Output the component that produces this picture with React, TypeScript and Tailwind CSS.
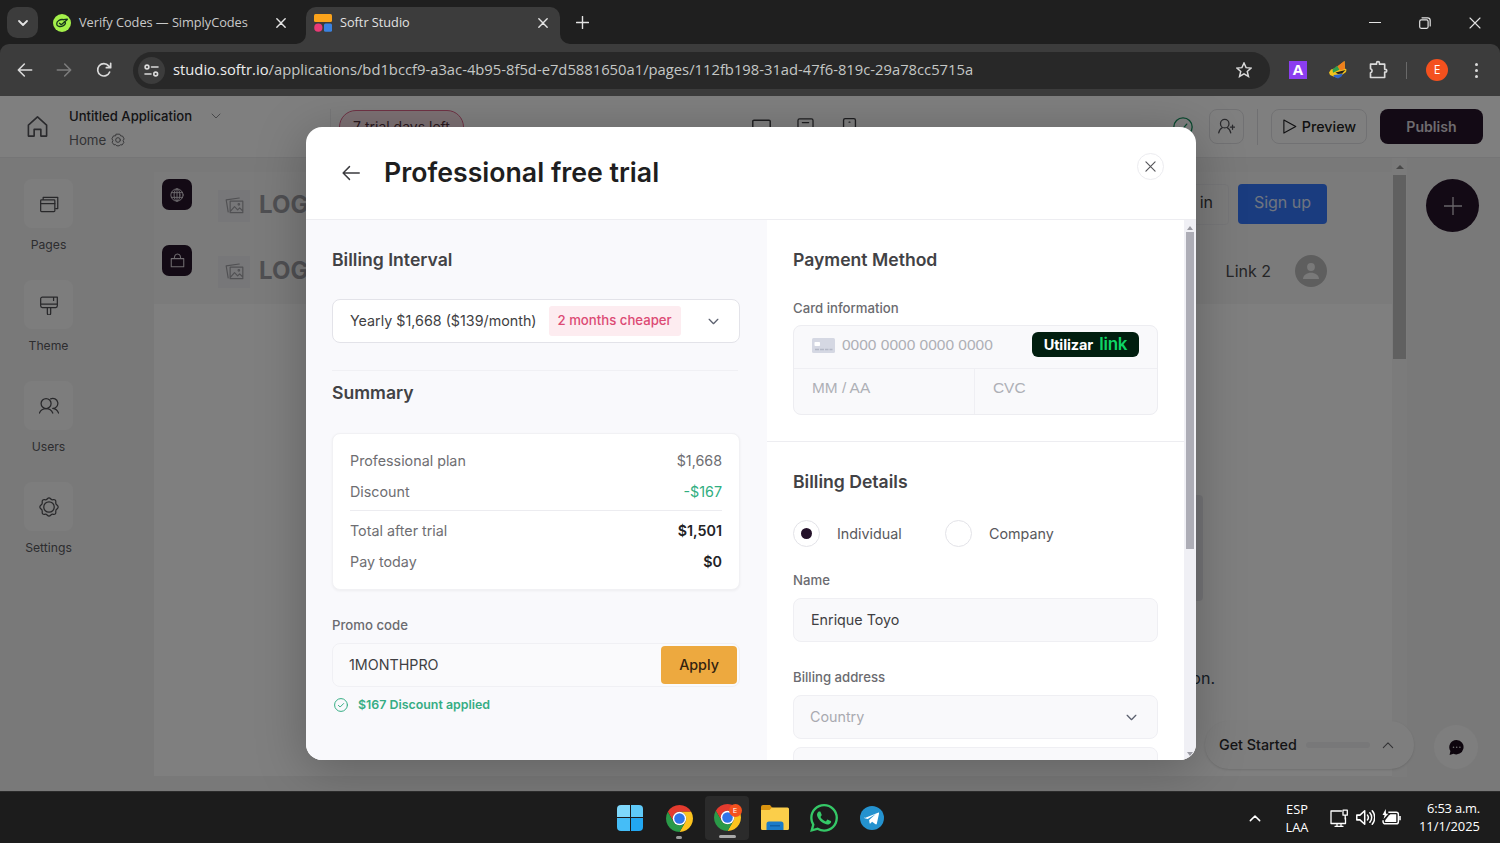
import type { ReactNode } from "react";

const UI = "font-['Inter','Liberation_Sans',sans-serif]";
const SYS = "font-['Open_Sans','Noto_Sans',sans-serif]";

type IconProps = {
  size?: number;
  w?: number;
  className?: string;
  box?: number;
  children: ReactNode;
};

function Icon({ size = 16, w = 1.5, box = 24, className = "", children }: IconProps) {
  return (
    <svg
      width={size}
      height={size}
      viewBox={`0 0 ${box} ${box}`}
      fill="none"
      stroke="currentColor"
      strokeWidth={w}
      strokeLinecap="round"
      strokeLinejoin="round"
      className={`shrink-0 ${className}`}
    >
      {children}
    </svg>
  );
}

function Chevron({ size = 14, w = 2, up = false, className = "" }: { size?: number; w?: number; up?: boolean; className?: string }) {
  return (
    <Icon size={size} w={w} className={className}>
      <path d={up ? "M4 16.5l8-8 8 8" : "M4 8l8 8 8-8"} />
    </Icon>
  );
}

function Close({ size = 10, w = 3, className = "" }: { size?: number; w?: number; className?: string }) {
  return (
    <Icon size={size} w={w} className={className}>
      <path d="M2 2l20 20M22 2L2 22" />
    </Icon>
  );
}

function ChromeLogo({ size = 27 }: { size?: number }) {
  return (
    <svg width={size} height={size} viewBox="0 0 48 48">
      <path fill="#e33b2e" d="M24 12H44.78A24 24 0 0 0 3.22 12L13.61 30A12 12 0 0 1 24 12Z" />
      <path fill="#fcc31e" d="M34.39 30L24 48A24 24 0 0 0 44.78 12H24A12 12 0 0 1 34.39 30Z" />
      <path fill="#2a9a48" d="M13.61 30L3.22 12A24 24 0 0 0 24 48L34.39 30A12 12 0 0 1 13.61 30Z" />
      <circle cx="24" cy="24" r="12" fill="#fff" />
      <circle cx="24" cy="24" r="9.4" fill="#2f74e8" />
    </svg>
  );
}

function TabStrip() {
  return (
    <div className="flex h-11 bg-[#1f1f1f] text-[#e3e3e3]">
      <div className="ml-[7px] mt-[7px] flex h-[31px] w-[31px] items-center justify-center rounded-[10px] bg-[#3c3c3c]">
        <Chevron size={12} w={3.6} />
      </div>
      <div className="ml-[15px] flex w-[236px] items-center pt-[1px]">
        <svg width="18" height="18" viewBox="0 0 18 18">
          <circle cx="9" cy="9" r="9" fill="#a4f04a" />
          <g fill="none" stroke="#16351c" strokeWidth="1.3" strokeLinejoin="round" strokeLinecap="round">
            <path d="M10.4 5.6C7 5 3.6 7 3.7 9.9c.1 2.6 3.6 3.2 6.3 1.9 2.6-1.2 3.3-3.5 1.3-4" />
            <path d="M6.5 9.3l1.8 1.4L14.3 5.5M10.4 5.6l3.9-.5" />
          </g>
        </svg>
        <span className="ml-2 w-[182px] whitespace-nowrap text-[12.8px] tracking-[-0.05px] text-[#c9c9c9]">Verify Codes — SimplyCodes</span>
        <Close size={10} w={3.4} className="ml-[15px]" />
      </div>
      <svg width="10" height="10" viewBox="0 0 10 10" className="ml-[7px] self-end">
        <path d="M10 0v10H0A10 10 0 0 0 10 0z" fill="#3c3c3c" />
      </svg>
      <div className="mt-[7px] flex h-[37px] w-[254px] items-center rounded-t-[10px] bg-[#3c3c3c] pb-[5px] pl-2">
        <svg width="18" height="18" viewBox="0 0 18 18">
          <rect width="18" height="8" rx="1.5" fill="#fba31b" />
          <circle cx="4.3" cy="13.7" r="4.1" fill="#ea3a76" />
          <rect x="10" y="9.6" width="8" height="8.2" rx="1.5" fill="#3a82e0" />
        </svg>
        <span className="ml-2 w-[198px] text-[12.7px] text-[#e3e3e3]">Softr Studio</span>
        <Close size={10} w={3.4} />
      </div>
      <svg width="10" height="10" viewBox="0 0 10 10" className="self-end">
        <path d="M0 0v10h10A10 10 0 0 1 0 0z" fill="#3c3c3c" />
      </svg>
      <div className="ml-[6px] flex items-center">
        <Icon size={13} w={2.6}>
          <path d="M12 1v22M1 12h22" />
        </Icon>
      </div>
      <div className="ml-auto flex items-center gap-[38px] pr-[19px] pt-px">
        <span className="h-px w-[12px] bg-[#e3e3e3]" />
        <Icon size={12} w={1.2} box={12}>
          <rect x="0.7" y="2.9" width="8.4" height="8.4" rx="1.5" />
          <path d="M3 .8h5.600a2.600 2.600 0 0 1 2.600 2.600V9" />
        </Icon>
        <Close size={12} w={2.2} />
      </div>
    </div>
  );
}

function Toolbar() {
  return (
    <div className="bg-[#1f1f1f]">
      <div className="flex h-[52px] items-center rounded-t-[9px] bg-[#3c3c3c] text-[#dadada]">
        <Icon size={16} w={2.4} className="ml-[17px]">
          <path d="M22 12H3M11 3l-9 9 9 9" />
        </Icon>
        <Icon size={16} w={2.4} className="ml-[23px] text-[#7c7c7c]">
          <path d="M2 12h19M13 3l9 9-9 9" />
        </Icon>
        <Icon size={16} w={2.5} className="ml-6">
          <path d="M20.5 15A9.3 9.3 0 1 1 19 5.8l2.5 2.5M22 2v6.5h-6.500" />
        </Icon>
        <div className="ml-[21px] flex h-[37px] w-[1137px] items-center rounded-full bg-[#282828]">
          <div className="ml-[5px] flex h-[27px] w-[27px] items-center justify-center rounded-full bg-[#3c3c3c]">
            <Icon size={15} w={1.6} box={15}>
              <circle cx="3" cy="4" r="1.9" />
              <path d="M7.5 4H14M1 11h6" />
              <circle cx="11.7" cy="11" r="1.9" />
            </Icon>
          </div>
          <span className="ml-2 w-[1063px] whitespace-nowrap pb-[2px] text-[14.78px] text-[#c4c7c5]">
            <span className="text-[#ececec]">studio.softr.io</span>
            /applications/bd1bccf9-a3ac-4b95-8f5d-e7d5881650a1/pages/112fb198-31ad-47f6-819c-29a78cc5715a
          </span>
          <Icon size={16} w={2.2}>
            <path d="M12 1.5l3.100 7 7.600.7-5.800 5 1.800 7.500L12 17.700l-6.700 4 1.800-7.500-5.800-5 7.600-.7z" strokeLinejoin="miter" />
          </Icon>
        </div>
        <div className="ml-[19px] flex h-[18px] w-[18px] items-center justify-center bg-[#8b3df0] pb-px text-[15px] font-bold text-white">A</div>
        <svg width="18" height="18" viewBox="0 0 18 18" className="ml-[22px]">
          <path d="M0 11.500L2 8.500 7 7 15.500 0l.5 7.500 1.500 1-.5 2.500-4 3-4 3-4.500-1.500L1 14z" fill="#f2c41c" />
          <path d="M8 5.500L15.500 0l.5 8-4.500 1.500z" fill="#ef7f1c" />
          <path d="M3.500 8.500L8 4.800l2.500 4-6.500 3z" fill="#2f9e4d" />
          <path d="M4.500 14l5-.5 4.500-1-1.500 3L9 17.500 5 15.800z" fill="#2c62c9" />
          <path d="M6.500 11.500l10-2.500-3.500 3.500-4 .5z" fill="#1d1d1d" />
        </svg>
        <Icon size={20} w={2} className="ml-[21px]">
          <path d="M3 5h7.200V3.800a1.500 1.500 0 0 1 3.600 0V5H20v6.200h.8a1.700 1.700 0 0 1 0 3.400H20V21H3v-5.500a2.600 2.600 0 0 0 0-5z" />
        </Icon>
        <span className="ml-[18px] h-[17px] w-px bg-[#696969]" />
        <div className="ml-[19px] flex h-[22px] w-[22px] items-center justify-center rounded-full bg-[#f4511e] text-[12px] text-white">E</div>
        <div className="ml-[27px] flex flex-col gap-[3px]">
          <span className="h-[3px] w-[3px] rounded-full bg-[#dadada]" />
          <span className="h-[3px] w-[3px] rounded-full bg-[#dadada]" />
          <span className="h-[3px] w-[3px] rounded-full bg-[#dadada]" />
        </div>
      </div>
    </div>
  );
}

function AppHeader() {
  return (
    <div className="flex h-[61px] shrink-0 items-center bg-white text-[#55555a]">
      <Icon size={23} w={1.7} className="ml-[26px]">
        <path d="M2.500 10.500L12 2l9.500 8.500v11.500h-6v-7h-7v7h-6z" />
      </Icon>
      <div className="ml-5 w-[261px] pt-[3px] text-[13.3px] leading-6">
        <div className="flex items-center text-[13.1px] font-medium text-[#29292d]">
          Untitled Application
          <Chevron size={12} w={1.5} className="ml-[18px] text-[#6b6b70]" />
        </div>
        <div className="flex items-center text-[#66666b]">
          Home
          <Icon size={14} w={1.6} className="ml-[5px]">
            <path d="M9 2h6l1.500 3 3.300.2 2.700 5-1.800 2.800 1.300 3.200-3 4.300-3-.2L14 22h-4l-2-2-3 .2-3-4.300 1.300-3.200L1.500 10l2.700-5 3.300-.2z" />
            <circle cx="12" cy="12" r="4" />
          </Icon>
        </div>
      </div>
      <span className="h-9 w-px bg-[#eeeef1]" />
      <div className="ml-2 flex h-[34px] w-[125px] items-center justify-center rounded-full border border-[#e0658a] bg-[#fae3e9] text-[14px] text-[#54333f]">
        7 trial days left
      </div>
      <div className="ml-[288px] flex items-center text-[#3c3c40]">
        <Icon size={19} w={1.8}>
          <rect x="1" y="4" width="22" height="15" rx="1.500" />
          <path d="M7 22h10" />
        </Icon>
        <Icon size={19} w={1.6} className="ml-[25px]">
          <rect x="2.500" y="2.500" width="19" height="19" rx="2" />
          <path d="M8 7h8" />
        </Icon>
        <Icon size={19} w={1.7} className="ml-[25px]">
          <rect x="4.500" y="2" width="15" height="20" rx="2" />
          <path d="M11.500 6.500h1" />
        </Icon>
      </div>
      <Icon size={20} w={1.6} className="ml-auto text-[#15925f]">
        <circle cx="12" cy="12" r="11" />
        <path d="M7.500 12.500l3 3 6-7" />
      </Icon>
      <div className="ml-4 flex h-[35px] w-[35px] items-center justify-center rounded-lg border border-[#e3e3e6]">
        <Icon size={17} w={1.8}>
          <circle cx="9.500" cy="8" r="6" />
          <path d="M1 21c1-4.500 3-6.500 5-7.500M18 21c-1-4.500-3-6.500-5-7.500M20.500 10v6M17.500 13h6" />
        </Icon>
      </div>
      <span className="ml-[13px] h-9 w-px bg-[#e0e0e4]" />
      <div className="ml-[13px] flex h-[35px] w-[96px] items-center justify-center gap-[5px] rounded-lg border border-[#e3e3e6] text-[14.3px] font-medium text-[#1f1f22]">
        <Icon size={15} w={1.8}>
          <path d="M3 1.500L22 12 3 22.500z" />
        </Icon>
        Preview
      </div>
      <div className="ml-[13px] mr-[17px] flex h-[35px] w-[103px] items-center justify-center rounded-lg bg-[#27142a] text-[14.1px] font-semibold text-[#dcd6de]">
        Publish
      </div>
    </div>
  );
}

const NAV = [
  {
    label: "Pages",
    icon: (
      <>
        <rect x="2" y="7" width="17" height="14" rx="1" />
        <path d="M2 11.500h17M5 6.500V4h17.500v13.500H20" />
      </>
    ),
  },
  {
    label: "Theme",
    icon: (
      <>
        <path d="M2 13V4.500a2 2 0 0 1 2-2h18V13a2 2 0 0 1-2 2H4a2 2 0 0 1-2-2zM2 11h20M17.500 2.500v4" />
        <path d="M10 15v7a2 2 0 0 0 4 0v-7" />
      </>
    ),
  },
  {
    label: "Users",
    icon: (
      <>
        <circle cx="8.500" cy="9" r="6" />
        <path d="M.5 20.500c1.500-4 4-5.500 8-5.500s6.500 1.500 8 5.500M14 3.500a6 6 0 1 1 2.500 11.400c3.500.3 5.500 2 7 5.600" />
      </>
    ),
  },
  {
    label: "Settings",
    icon: (
      <>
        <path d="M12 1c1.700 0 1.900 1.700 3.300 2.200 1.400.5 3.100-.6 4.300.6 1.200 1.200.1 2.900.7 4.300.5 1.400 2.700 2.200 2.700 3.900s-2.200 2.500-2.700 3.900c-.6 1.400.5 3.100-.7 4.300s-2.900.1-4.300.6C13.900 21.300 13.700 23 12 23s-1.900-1.700-3.300-2.200c-1.400-.5-3.100.6-4.300-.6s-.1-2.900-.7-4.300C3.200 14.500 1 13.700 1 12s2.200-2.500 2.700-3.900c.6-1.400-.5-3.100.7-4.300s2.900-.1 4.300-.6C10.100 2.700 10.300 1 12 1z" />
        <circle cx="12" cy="12" r="6.300" />
      </>
    ),
  },
];

function LogoPlaceholder() {
  return (
    <>
      <div className="mt-px flex h-8 w-8 items-center justify-center bg-[#efeff2] text-[#a2a2a8]">
        <Icon size={19} w={1.5}>
          <path d="M4 20L1.500 5 18 2.500M6.500 6.500H22.500V21H6.500zM7 19l5-5.500 4 4 2.500-2.500 4 4" />
          <circle cx="17.500" cy="10.500" r="1" />
        </Icon>
      </div>
      <span className="ml-[9px] text-[24px] font-bold text-[#9f9fa5]">LOGO</span>
    </>
  );
}

function Studio() {
  return (
    <div className="flex h-full flex-col bg-[#f3f3f3]">
      <AppHeader />
      <div className="flex flex-1 border-t border-[#ebebed]">
        <div className="flex w-[154px] flex-col pt-[21px]">
          {NAV.map((n) => (
            <div key={n.label} className="flex h-[101px] w-[97px] flex-col items-center">
              <div className="flex h-[49px] w-[49px] items-center justify-center rounded-lg bg-[#fbfbfb] text-[#505055]">
                <Icon size={20} w={1.5}>{n.icon}</Icon>
              </div>
              <span className="mt-[7px] text-[12.2px] leading-5 text-[#5a5a5f]">{n.label}</span>
            </div>
          ))}
        </div>
        <div className="flex w-[1238px] flex-col pt-[14px]">
          <div className="flex h-[66px] items-center bg-[#f7f7f7] pl-2">
            <div className="mb-[21px] mr-[26px] flex h-[31px] w-[30px] items-center justify-center rounded-[7px] bg-[#27142a] text-[#dcd6de]">
              <Icon size={14} w={1.7}>
                <circle cx="12" cy="12" r="10.500" />
                <ellipse cx="12" cy="12" rx="5" ry="10.500" />
                <path d="M12 1.500v21M2.500 8h19M2.500 16h19" />
              </Icon>
            </div>
            <LogoPlaceholder />
            <div className="mb-[2px] ml-auto mr-[9px] flex h-[41px] items-center rounded border border-[#ededf0] px-[15px] pb-[5px] text-[16px] text-[#39393c]">Sign in</div>
            <div className="mb-[2px] mr-[65px] flex h-[40px] w-[89px] items-center justify-center rounded bg-[#3478ff] pb-1 text-[16px] text-[#dfe8ff]">
              Sign up
            </div>
          </div>
          <div className="flex h-[66px] items-center bg-[#f7f7f7] pl-2">
            <div className="mb-[21px] mr-[26px] flex h-[31px] w-[30px] items-center justify-center rounded-[7px] bg-[#27142a] text-[#dcd6de]">
              <Icon size={15} w={1.7}>
                <path d="M2 9h20v13H2zM7 8.500C7 5 8.500 1.500 12 1.500S17 5 17 8.500" />
              </Icon>
            </div>
            <LogoPlaceholder />
            <span className="ml-auto text-[16px] text-[#4a4a4d]">Link 2</span>
            <div className="ml-6 mr-[65px] flex h-8 w-8 items-center justify-center rounded-full bg-[#bdbdbd]">
              <svg width="16" height="16" viewBox="0 0 16 16" fill="#f2f2f2">
                <circle cx="8" cy="4" r="3.900" />
                <path d="M0 16c0-4 4-6.300 8-6.300S16 12 16 16z" />
              </svg>
            </div>
          </div>
          <div className="flex h-[472px] flex-col items-end bg-white">
            <div className="mr-[189px] mt-[191px] h-[106px] w-[400px] rounded bg-[#e9e9ee]" />
            <span className="mr-[177px] mt-[65px] text-[16px] text-[#2c3a4c]">on.</span>
          </div>
        </div>
        <div className="flex h-[619px] w-[15px] flex-col items-center bg-[#f6f6f6] pt-[7px]">
          <svg width="8" height="4" viewBox="0 0 8 4" fill="#909090">
            <path d="M0 4l4-4 4 4z" />
          </svg>
          <div className="mt-[6px] h-[184px] w-[13px] bg-[#c1c1c1]" />
        </div>
        <div className="pl-[19px] pt-[21px]">
          <div className="flex h-[53px] w-[53px] items-center justify-center rounded-full bg-[#27142a] text-[#d0c9d2]">
            <Icon size={18} w={1.8}>
              <path d="M12 0v24M0 12h24" />
            </Icon>
          </div>
        </div>
      </div>

      {/* floating helpers */}
      <div className="absolute bottom-[22px] right-[86px] flex h-[48px] w-[209px] items-center rounded-full bg-[#fdfdfd] pl-[14px] shadow-sm">
        <span className="text-[14.3px] font-medium text-[#2a2a2d]">Get Started</span>
        <span className="ml-[9px] h-[6px] w-[64px] rounded-full bg-[#f0f0f2]" />
        <Chevron up size={14} w={1.9} className="ml-[11px] text-[#66666b]" />
      </div>
      <div className="absolute bottom-[22px] right-[22px] flex h-[44px] w-[44px] items-center justify-center rounded-full bg-[#fcfcfc]">
        <svg width="15" height="15" viewBox="0 0 15 15">
          <path d="M7.700 0A7.200 7.200 0 1 1 4.500 13.800L.6 15l.8-4A7.200 7.200 0 0 1 7.700 0z" fill="#1a0a1a" />
          <g fill="#e5e5e5">
            <circle cx="4.500" cy="7.300" r=".8" />
            <circle cx="7.700" cy="7.300" r=".8" />
            <circle cx="10.900" cy="7.300" r=".8" />
          </g>
        </svg>
      </div>
    </div>
  );
}

function Row({ label, value, className = "text-[#6e6e72]" }: { label: string; value: string; className?: string }) {
  return (
    <div className="flex h-[31px] items-center justify-between">
      <span className="text-[#6e6e72]">{label}</span>
      <span className={className}>{value}</span>
    </div>
  );
}

function PlanColumn() {
  return (
    <div className="w-[461px] bg-[#f9f9fc] px-[26px] pt-7 text-[14.3px]">
      <h2 className="text-[17.6px] font-semibold leading-6 text-[#424245]">Billing Interval</h2>
      <div className="mt-[27px] flex h-[44px] w-[408px] items-center rounded-lg border border-[#e3e3e9] bg-white pl-[17px]">
        <span className="text-[#3f3f43]">Yearly $1,668 ($139/month)</span>
        <span className="ml-[12px] flex h-[30px] w-[132px] items-center justify-center rounded-[3px] bg-[#fdecf0] text-[13.2px] font-medium text-[#dc4a74]">
          2 months cheaper
        </span>
        <Chevron size={13} w={2.4} className="ml-[26px] text-[#5d6270]" />
      </div>
      <div className="mt-[27px] h-px w-[406px] bg-[#f0f0f4]" />
      <h2 className="mt-[10px] text-[17.6px] font-semibold leading-6 text-[#424245]">Summary</h2>
      <div className="mt-7 h-[157px] w-[408px] rounded-lg border border-[#f1f1f4] bg-white px-[17px] pt-[11px] shadow-[0_1px_3px_rgba(0,0,0,0.05)]">
        <Row label="Professional plan" value="$1,668" />
        <Row label="Discount" value="-$167" className="text-[#2fae80]" />
        <div className="mb-[4px] mt-[3px] h-px bg-[#ececf0]" />
        <Row label="Total after trial" value="$1,501" className="font-semibold text-[#232326]" />
        <Row label="Pay today" value="$0" className="font-semibold text-[#232326]" />
      </div>
      <div className="mt-[25px] text-[13.2px] font-medium leading-5 text-[#6b6b70]">Promo code</div>
      <div className="mt-2 flex h-[44px] w-[408px] items-center justify-between rounded-lg border border-[#f0f0f4] bg-[#fafafc] pl-4 pr-[2px]">
        <span className="text-[#3f3f43]">1MONTHPRO</span>
        <span className="flex h-[38px] w-[76px] items-center justify-center rounded bg-[#eda93f] font-medium text-[#33230f]">Apply</span>
      </div>
      <div className="mt-[8px] flex items-center gap-[10px] pl-[2px] text-[12.4px] font-semibold leading-5 text-[#35ad84]">
        <Icon size={14} w={1.7}>
          <circle cx="12" cy="12" r="11" />
          <path d="M7.500 12.500l3 3 6-6" />
        </Icon>
        $167 Discount applied
      </div>
    </div>
  );
}

function PaymentColumn() {
  return (
    <div className="h-full w-[417px] overflow-hidden bg-white pt-7 text-[14.3px]">
      <div className="px-[26px]">
        <h2 className="text-[17.6px] font-semibold leading-6 text-[#424245]">Payment Method</h2>
        <div className="mt-[26px] text-[13.2px] font-medium leading-5 text-[#6b6b70]">Card information</div>
        <div className="mt-[7px] h-[90px] w-[365px] rounded-lg border border-[#ededf1] bg-[#f9f9fb] text-[#aeb0b6]">
          <div className="flex h-[43px] items-center border-b border-[#efeff3] pb-1 pl-[18px] pr-[18px]">
            <svg width="23" height="15" viewBox="0 0 23 15">
              <rect width="23" height="15" rx="1.500" fill="#d5d8e3" />
              <rect x="2.500" y="4" width="5.500" height="4" rx=".8" fill="#fff" />
              <path d="M3 11.500h4M8 11.500h4M13 11.500h3.500M17.500 11.500h3" stroke="#b4b8c6" strokeWidth="1.500" />
            </svg>
            <span className="ml-[7px] font-['Liberation_Sans',sans-serif] text-[15.5px]">0000 0000 0000 0000</span>
            <div className="mb-px ml-auto flex h-[25px] w-[107px] items-center justify-center gap-[6px] rounded-md bg-[#011e0f] text-[14.5px] font-bold tracking-[-0.1px] text-white">
              Utilizar
              <span className="pt-px text-[17px] font-semibold tracking-[-0.2px] text-[#0fd566]">link</span>
            </div>
          </div>
          <div className="flex h-[45px] font-['Liberation_Sans',sans-serif] text-[15.4px]">
            <div className="flex w-[181px] items-center border-r border-[#efeff3] pb-[7px] pl-[18px]">MM / AA</div>
            <div className="flex items-center pb-[7px] pl-[18px]">CVC</div>
          </div>
        </div>
      </div>
      <div className="mt-[26px] h-px bg-[#ededf1]" />
      <div className="px-[26px] pt-7">
        <h2 className="text-[17.6px] font-semibold leading-6 text-[#424245]">Billing Details</h2>
        <div className="mt-[26px] flex items-center text-[#58585c]">
          <span className="flex h-[27px] w-[27px] items-center justify-center rounded-full border border-[#e3e3e8]">
            <span className="h-[11px] w-[11px] rounded-full bg-[#24122a]" />
          </span>
          <span className="ml-[17px] w-[108px]">Individual</span>
          <span className="h-[27px] w-[27px] rounded-full border border-[#e3e3e8]" />
          <span className="ml-[17px]">Company</span>
        </div>
        <div className="mt-[23px] text-[13.2px] font-medium leading-5 text-[#6b6b70]">Name</div>
        <div className="mt-2 flex h-[44px] w-[365px] items-center rounded-lg border border-[#efeff3] bg-[#f9f9fb] pl-[17px] text-[#3f3f43]">Enrique Toyo</div>
        <div className="mt-[25px] text-[13.2px] font-medium leading-5 text-[#6b6b70]">Billing address</div>
        <div className="mt-2 flex h-[44px] w-[365px] items-center justify-between rounded-lg border border-[#efeff3] bg-[#f9f9fb] pl-4 pr-[19px] text-[#a9aab0]">
          Country
          <Chevron size={13} w={2.4} className="text-[#5d6270]" />
        </div>
        <div className="mt-[8px] h-[44px] w-[365px] rounded-lg border border-[#efeff3] bg-[#f9f9fb]" />
      </div>
    </div>
  );
}

function TrialModal() {
  return (
    <div className="flex h-[633px] w-[890px] flex-col overflow-hidden rounded-2xl bg-white shadow-[0_8px_50px_rgba(0,0,0,0.25)]">
      <div className="flex h-[93px] shrink-0 items-center border-b border-[#ededf1] pl-9 pr-8">
        <Icon size={18} w={1.9} className="text-[#3a3a3e]">
          <path d="M23 12H2M10 3.500L1.500 12l8.500 8.500" />
        </Icon>
        <h1 className="ml-[24px] whitespace-nowrap pb-[2px] text-[26.7px] font-semibold text-[#1e1e20]">Professional free trial</h1>
        <div className="mb-[13px] ml-auto flex h-[27px] w-[27px] items-center justify-center rounded-full border border-[#ececf0] text-[#55555a]">
          <Close size={11} w={2.5} />
        </div>
      </div>
      <div className="flex h-[540px]">
        <PlanColumn />
        <PaymentColumn />
        <div className="flex flex-1 flex-col items-center bg-[#f0f0f5] pt-[6px]">
          <svg width="6" height="4" viewBox="0 0 6 4" fill="#9a9aa2">
            <path d="M0 4l3-4 3 4z" />
          </svg>
          <div className="mt-[2px] h-[317px] w-2 bg-[#adadb6]" />
          <svg width="6" height="4" viewBox="0 0 6 4" fill="#9a9aa2" className="mb-1 mt-auto">
            <path d="M0 0h6L3 4z" />
          </svg>
        </div>
      </div>
    </div>
  );
}

function Taskbar() {
  return (
    <div className="flex h-[52px] items-center border-t border-[#2b2b2b] bg-[#1c1c1c] text-white">
      <div className="ml-[617px] grid h-[26px] w-[26px] grid-cols-2 gap-px">
        <span className="rounded-tl-sm bg-[#7fd8fb]" />
        <span className="rounded-tr-sm bg-[#5fcaf9]" />
        <span className="rounded-bl-sm bg-[#45bdf7]" />
        <span className="rounded-br-sm bg-[#22a7f2]" />
      </div>
      <div className="ml-[22px] flex w-[28px] flex-col items-center pt-[8px]">
        <ChromeLogo />
        <span className="mt-[4px] h-[3px] w-[6px] rounded-full bg-[#9c9c9c]" />
      </div>
      <div className="ml-[12px] flex h-[44px] w-[44px] flex-col items-center rounded bg-[#2b2b2b] pt-[8px]">
        <div className="relative">
          <ChromeLogo />
          <span className="absolute -right-px top-0 flex h-[13px] w-[13px] items-center justify-center rounded-full bg-[#f4511e] text-[8px] text-white">E</span>
        </div>
        <span className="mt-[4px] h-[3px] w-[17px] rounded-full bg-[#a9a9a9]" />
      </div>
      <svg width="28" height="25" viewBox="0 0 28 25" className="ml-[12px]">
        <path d="M0 2a2 2 0 0 1 2-2h7l3 3.500L9 6H0z" fill="#d9930f" />
        <path d="M0 5h8.500L11 2.500h15.500A1.500 1.500 0 0 1 28 4v19.500a1.500 1.500 0 0 1-1.500 1.500h-25A1.500 1.500 0 0 1 0 23.500z" fill="#fbce4a" />
        <path d="M5.500 25v-6a2.500 2.500 0 0 1 2.500-2.500h12a2.500 2.500 0 0 1 2.500 2.500v6z" fill="#1a7bc9" />
        <path d="M9 20h10v1.500H9z" fill="#0f5fa5" />
      </svg>
      <svg width="28" height="28" viewBox="0 0 24 24" className="ml-[21px]">
        <path
          fill="#35c867"
          d="M17.472 14.382c-.297-.149-1.758-.867-2.030-.967-.273-.099-.471-.148-.67.150-.197.297-.767.966-.940 1.164-.173.199-.347.223-.644.075-.297-.150-1.255-.463-2.390-1.475-.883-.788-1.480-1.761-1.653-2.059-.173-.297-.018-.458.130-.606.134-.133.298-.347.446-.520.149-.174.198-.298.298-.497.099-.198.050-.371-.025-.520-.075-.149-.669-1.612-.916-2.207-.242-.579-.487-.500-.669-.510-.173-.008-.371-.010-.570-.010-.198 0-.520.074-.792.372-.272.297-1.040 1.016-1.040 2.479 0 1.462 1.065 2.875 1.213 3.074.149.198 2.096 3.200 5.077 4.487.709.306 1.262.489 1.694.625.712.227 1.360.195 1.871.118.571-.085 1.758-.719 2.006-1.413.248-.694.248-1.289.173-1.413-.074-.124-.272-.198-.570-.347m-5.421 7.403h-.004a9.870 9.870 0 01-5.031-1.378l-.361-.214-3.741.982.998-3.648-.235-.374a9.860 9.860 0 01-1.510-5.260c.001-5.450 4.436-9.884 9.888-9.884 2.640 0 5.122 1.030 6.988 2.898a9.825 9.825 0 012.893 6.994c-.003 5.450-4.437 9.884-9.885 9.884m8.413-18.297A11.815 11.815 0 0012.050 0C5.495 0 .160 5.335.157 11.892c0 2.096.547 4.142 1.588 5.945L.057 24l6.305-1.654a11.882 11.882 0 005.683 1.448h.005c6.554 0 11.890-5.335 11.893-11.893a11.821 11.821 0 00-3.480-8.413z"
        />
      </svg>
      <svg width="24" height="24" viewBox="0 0 24 24" className="ml-[22px]">
        <circle cx="12" cy="12" r="12" fill="#2492cf" />
        <path d="M4.800 11.900L18 6.700c.7-.3 1.200.2 1 1l-2.200 10c-.2.800-.7.900-1.300.6l-3.400-2.500-1.700 1.600c-.3.300-.7.200-.8-.2l-.5-3.200 6.700-6-8.100 5.100-3-.9c-.6-.2-.6-.7.100-1z" fill="#fff" />
      </svg>
      <Chevron up size={14} w={2.6} className="ml-[364px]" />
      <div className="ml-[20px] w-[30px] text-center text-[12.8px] leading-[18px]">
        ESP
        <br />
        LAA
      </div>
      <Icon size={18} w={1.3} box={18} className="ml-[18px]">
        <path d="M11.500 2H1v12.500h14.500V9M5 17.300h8M7 14.500v2.500M11 14.500v2.500" />
        <path d="M13 1.200h4.300v5H13zM15.200 6.200V10" />
      </Icon>
      <Icon size={19} w={1.9} className="ml-[8px]">
        <path d="M1 9h4l6-5.500v17L5 15H1zM14.500 9a5 5 0 0 1 0 6M17.500 6a9 9 0 0 1 0 12M20.500 3.500a13 13 0 0 1 0 17" />
      </Icon>
      <svg width="19" height="16" viewBox="0 0 18 15" className="mb-px ml-[7px]">
        <path d="M6 3h7.500a2 2 0 0 1 2 2v7a2 2 0 0 1-2 2H3a2 2 0 0 1-2-2v-1.500" fill="none" stroke="#fff" strokeWidth="1.400" />
        <path d="M3 12.300v-1.800L6.500 6 8 5h5.500v7.300z" fill="#fff" />
        <path d="M16.300 6.500h1.500v4h-1.500z" fill="#fff" />
        <path d="M3.500 0L.5 5.500h2l-1 4L6 4.500H3.800z" fill="#fff" />
      </svg>
      <div className="mb-[2px] ml-auto mr-5 text-right text-[12.9px] leading-[18px]">
        <span className="tracking-[-0.2px]">6:53 a.m.</span>
        <br />
        11/1/2025
      </div>
    </div>
  );
}

export default function App() {
  return (
    <div className={`h-[843px] w-[1500px] overflow-hidden ${SYS}`}>
      <TabStrip />
      <Toolbar />
      <div className={`relative h-[695px] overflow-hidden ${UI}`}>
        <Studio />
        <div className="absolute inset-0 flex items-start bg-black/50 pl-[306px] pt-[31px]">
          <TrialModal />
        </div>
      </div>
      <Taskbar />
    </div>
  );
}
